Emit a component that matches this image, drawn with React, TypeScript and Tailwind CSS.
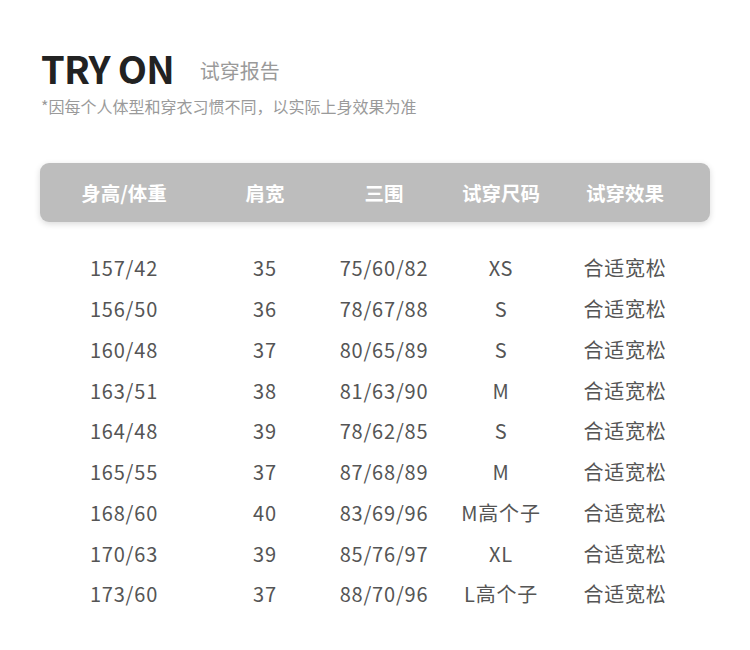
const rows = [
  ["157/42", "35", "75/60/82", "XS", "合适宽松"],
  ["156/50", "36", "78/67/88", "S", "合适宽松"],
  ["160/48", "37", "80/65/89", "S", "合适宽松"],
  ["163/51", "38", "81/63/90", "M", "合适宽松"],
  ["164/48", "39", "78/62/85", "S", "合适宽松"],
  ["165/55", "37", "87/68/89", "M", "合适宽松"],
  ["168/60", "40", "83/69/96", "M高个子", "合适宽松"],
  ["170/63", "39", "85/76/97", "XL", "合适宽松"],
  ["173/60", "37", "88/70/96", "L高个子", "合适宽松"],
];

const headers = ["身高/体重", "肩宽", "三围", "试穿尺码", "试穿效果"];
const grid = "grid grid-cols-[168px_114px_124px_110px_138px]";

export default function App() {
  return (
    <div
      className="w-[750px] h-[650px] bg-white"
      style={{ fontFamily: '"Noto Sans CJK SC", "Noto Sans", sans-serif' }}
    >
      <div className="pt-[44px] pl-[41px]">
        <div className="flex items-center">
          <span className="text-[38px] leading-[48px] font-bold text-[#222] tracking-[-0.8px]">TRY ON</span>
          <span className="ml-[26px] text-[20px] text-[#9a9a9a] mt-[6px]">试穿报告</span>
        </div>
        <div className="mt-[2px] text-[16px] leading-[24px] text-[#9a9a9a]">
          *因每个人体型和穿衣习惯不同，以实际上身效果为准
        </div>
      </div>
      <div className="mx-[40px] mt-[45px]">
        <div className={`${grid} h-[59px] items-center rounded-[9px] bg-[#bdbdbd] shadow-[0_2px_6px_rgba(0,0,0,0.15)]`}>
          {headers.map((h) => (
            <div key={h} className="text-center text-[19.5px] font-bold text-white">
              {h}
            </div>
          ))}
        </div>
        <div className="mt-[26px]">
          {rows.map((r, i) => (
            <div key={i} className={`${grid} h-[40.75px] items-center`}>
              {r.map((c, j) => (
                <div key={j} className="text-center text-[20px] tracking-[0.8px] text-[#555]">
                  {c}
                </div>
              ))}
            </div>
          ))}
        </div>
      </div>
    </div>
  );
}
